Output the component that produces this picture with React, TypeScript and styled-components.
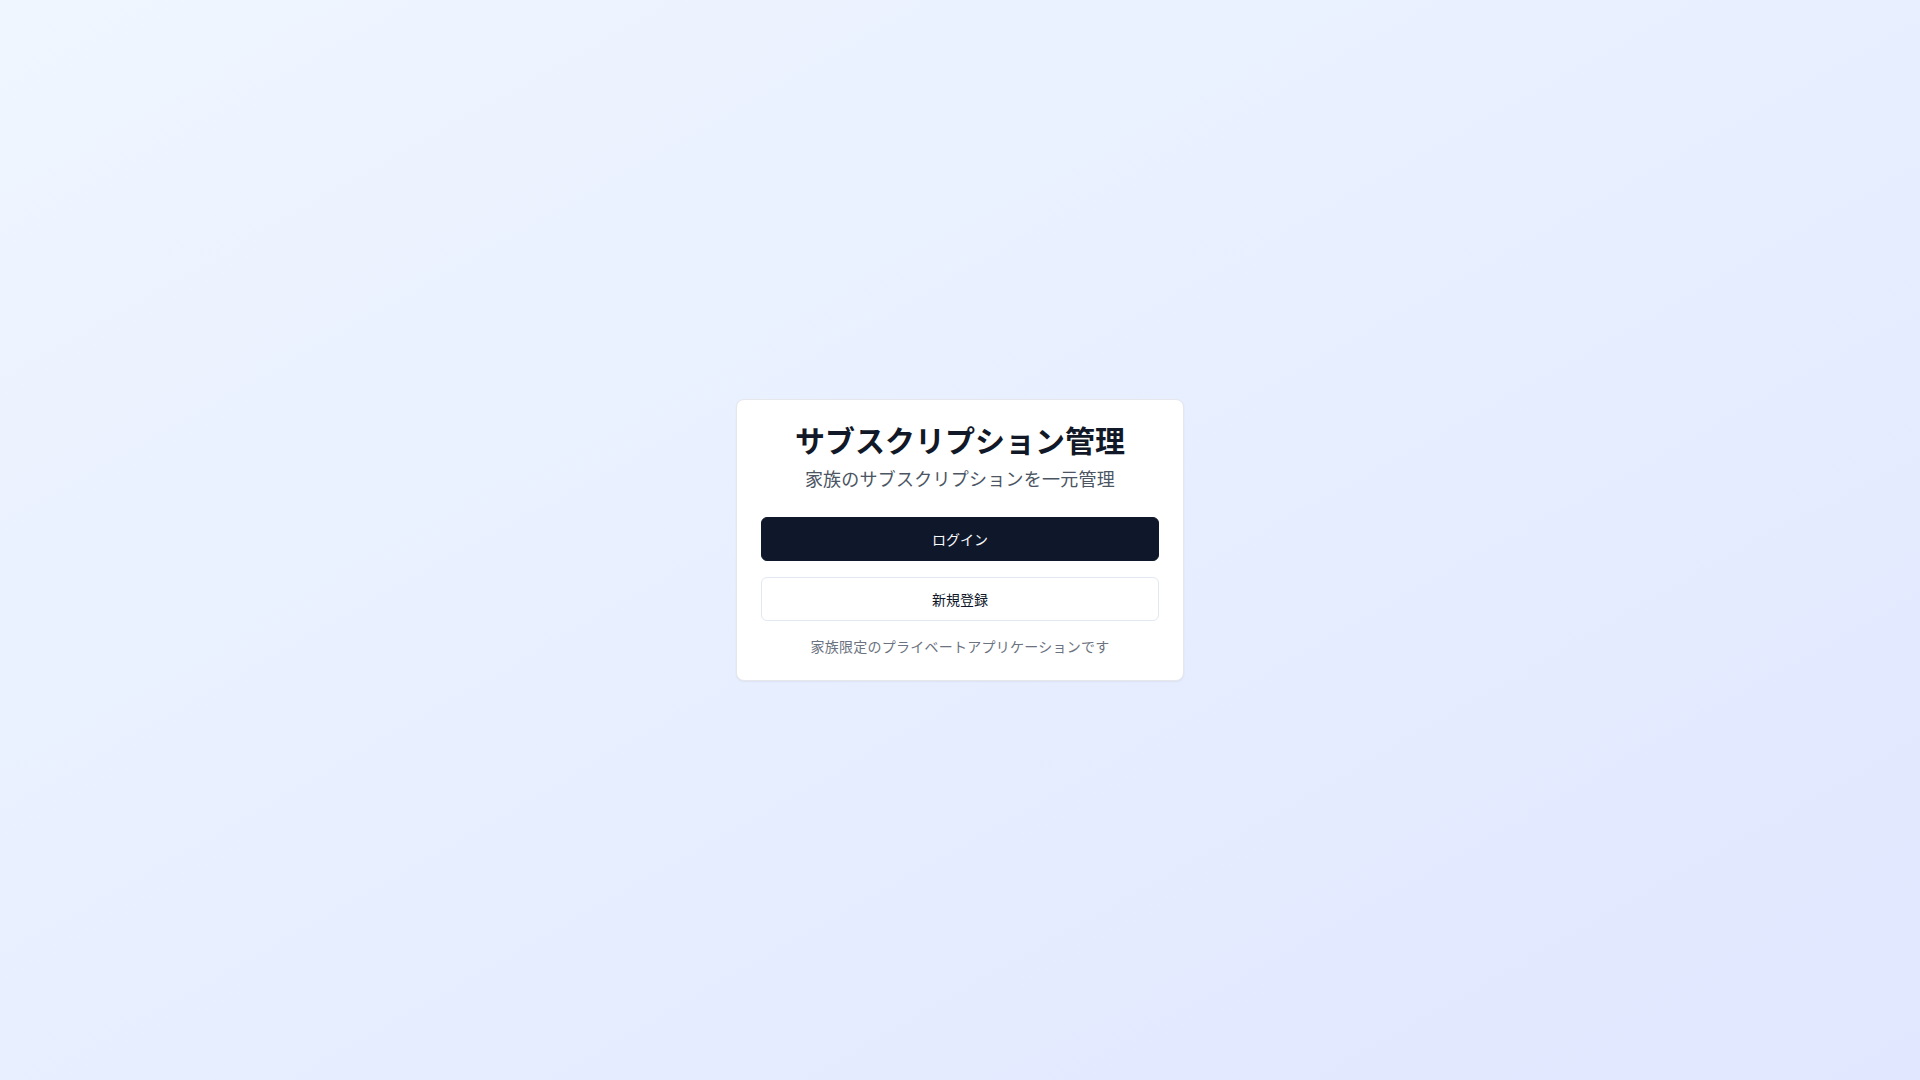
import React, { ReactElement } from 'react'
import styled, { createGlobalStyle } from 'styled-components'

const GlobalStyle = createGlobalStyle`
  html, body, #root {
    height: 100%;
  }

  body {
    margin: 0;
    font-family: 'Inter', 'Noto Sans CJK JP', sans-serif;
    color: #0f172a;
  }

  * {
    box-sizing: border-box;
  }
`

export default function App(): ReactElement {
  return (
    <>
      <GlobalStyle />
      <Page>
        <Card>
          <Header>
            <Title>サブスクリプション管理</Title>
            <Subtitle>家族のサブスクリプションを一元管理</Subtitle>
          </Header>
          <Actions>
            <Button variant="primary">ログイン</Button>
            <Button variant="outline">新規登録</Button>
          </Actions>
          <Note>家族限定のプライベートアプリケーションです</Note>
        </Card>
      </Page>
    </>
  )
}

const Page = styled.div`
  min-height: 100vh;
  display: flex;
  align-items: center;
  justify-content: center;
  background: linear-gradient(to bottom right, #eff6ff, #e0e7ff);
`

const Card = styled.div`
  width: 448px;
  background: #ffffff;
  border: 1px solid #e5e7eb;
  border-radius: 8px;
  box-shadow: 0 1px 2px 0 rgb(0 0 0 / 0.05);
  padding: 23px 24px 23px;
  display: flex;
  flex-direction: column;
`

const Header = styled.div`
  display: flex;
  flex-direction: column;
  align-items: center;
  gap: 7px;
  margin-bottom: 23px;
`

const Title = styled.h1`
  margin: 0;
  font-size: 30px;
  line-height: 36px;
  font-weight: 700;
  color: #111827;
`

const Subtitle = styled.p`
  margin: 0;
  font-size: 18px;
  line-height: 28px;
  letter-spacing: 0.25px;
  color: #4b5563;
`

const Actions = styled.div`
  display: flex;
  flex-direction: column;
  gap: 16px;
`

const Button = styled.button<{ variant: 'primary' | 'outline' }>`
  height: 44px;
  width: 100%;
  border-radius: 6px;
  font-family: inherit;
  font-size: 14px;
  font-weight: 400;
  cursor: pointer;
  border: 1px solid ${ props => props.variant === 'primary' ? '#0f172a' : '#e2e8f0' };
  background: ${ props => props.variant === 'primary' ? '#0f172a' : '#ffffff' };
  color: ${ props => props.variant === 'primary' ? '#f8fafc' : '#0f172a' };
`

const Note = styled.p`
  margin: 16px 0 0;
  text-align: center;
  font-size: 14px;
  line-height: 20px;
  letter-spacing: 0.25px;
  color: #6b7280;
`
